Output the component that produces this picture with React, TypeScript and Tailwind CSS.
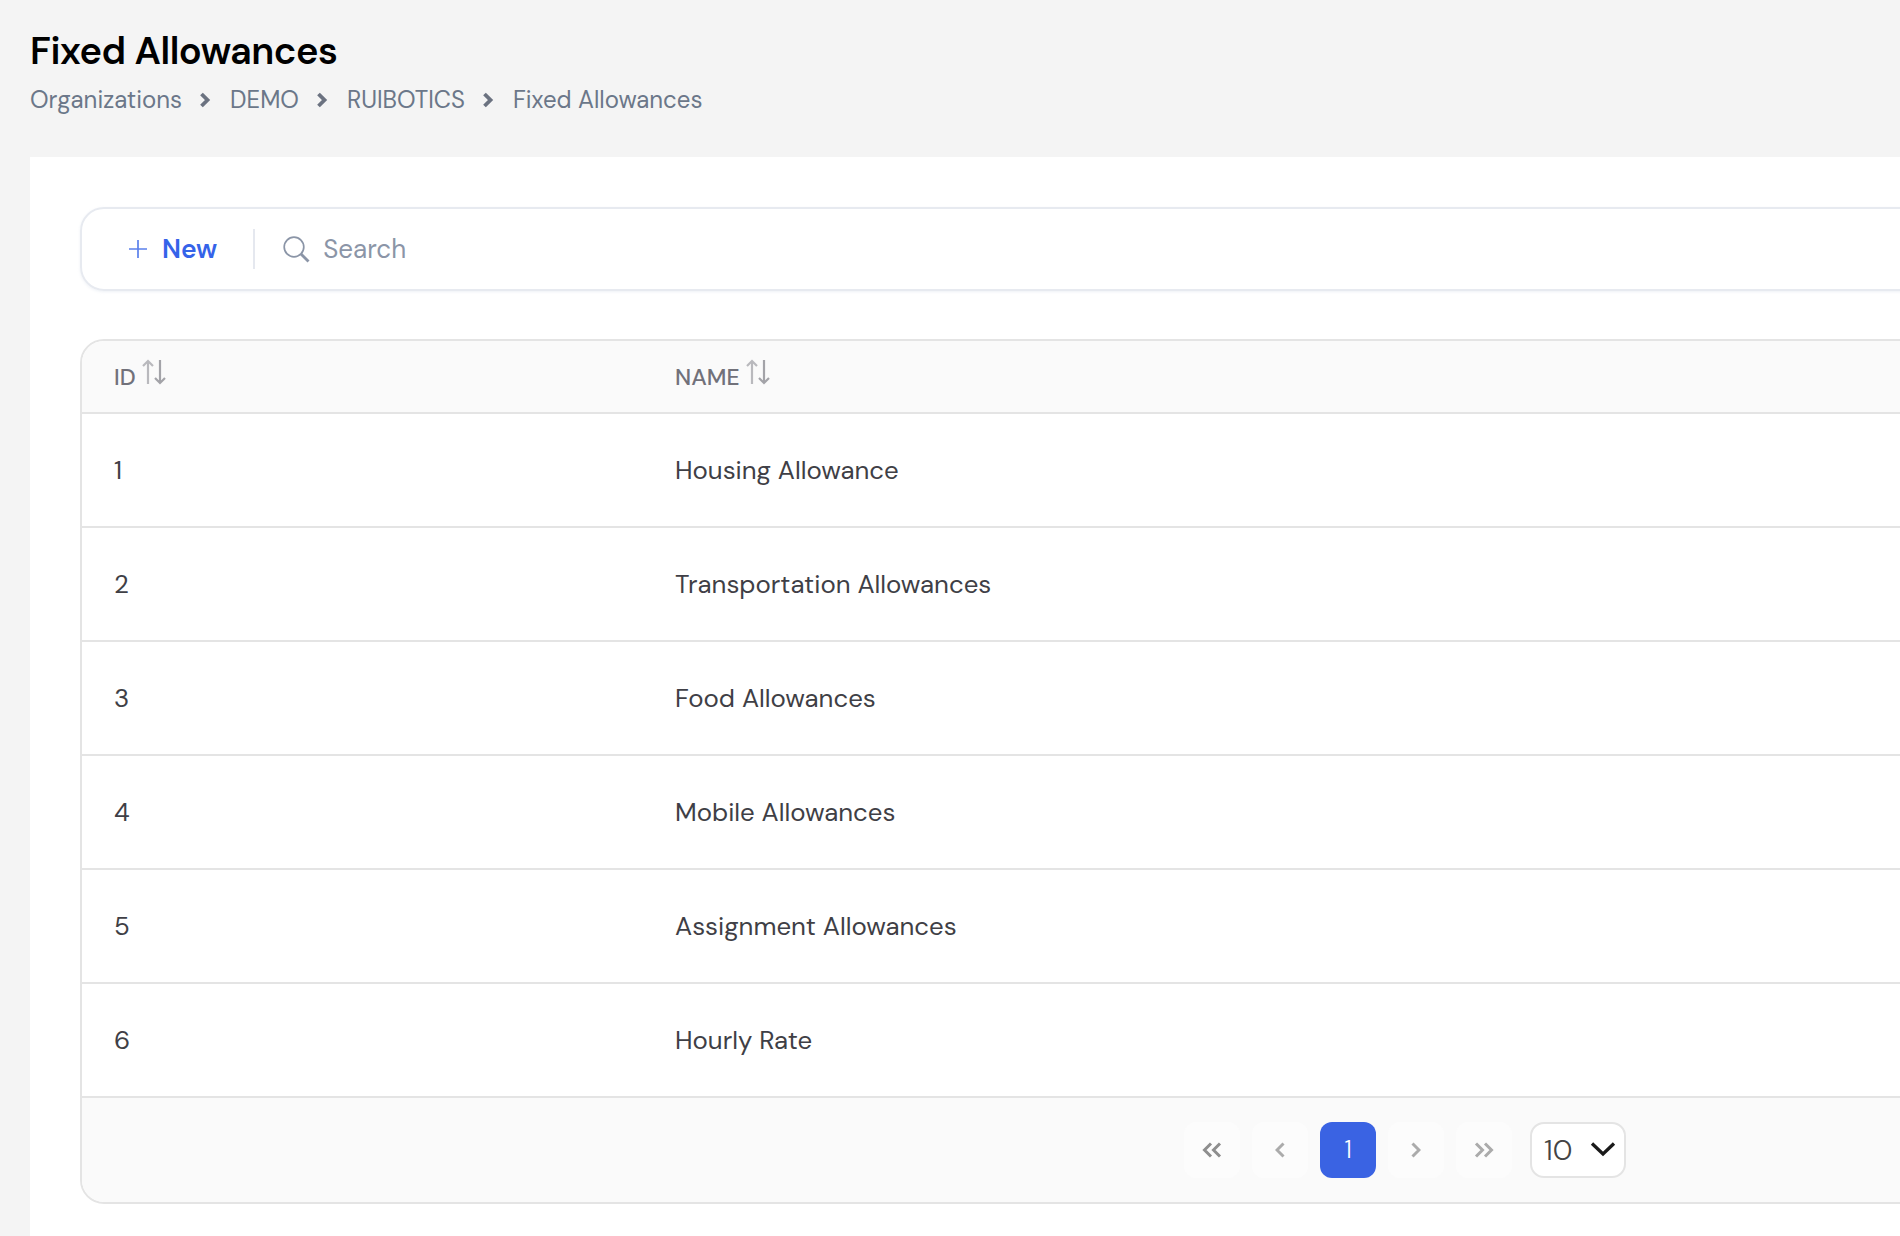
import type { ReactNode } from "react"

const rows = [
  { id: 1, name: "Housing Allowance" },
  { id: 2, name: "Transportation Allowances" },
  { id: 3, name: "Food Allowances" },
  { id: 4, name: "Mobile Allowances" },
  { id: 5, name: "Assignment Allowances" },
  { id: 6, name: "Hourly Rate" },
]

const crumbs = ["Organizations", "DEMO", "RUIBOTICS", "Fixed Allowances"]

function SortIcon() {
  return (
    <svg width="26" height="28" viewBox="0 0 26 28" fill="none" strokeWidth="2.2" className="mb-[8px] ml-[5px]">
      <path d="M7 26V3M2 8l5-5 5 5" stroke="#b9b9bd" />
      <path d="M19 2v23M14 20l5 5 5-5" stroke="#a3a3a8" />
    </svg>
  )
}

function Crumb() {
  return (
    <svg width="12" height="16" viewBox="0 0 12 16" fill="none" className="ml-[17px] mr-[19px]">
      <path d="M2.500 2 8.500 8l-6 6" stroke="#6b7280" strokeWidth="3.800" />
    </svg>
  )
}

function PageButton({ color, children }: { color: string; children: ReactNode }) {
  return (
    <button className={`flex h-[56px] w-[56px] items-center justify-center rounded-[12px] bg-[#fcfcfc] ${color}`}>
      {children}
    </button>
  )
}

function Chevrons({ d, w }: { d: string; w: number }) {
  return (
    <svg width={w} height="16" viewBox={`0 0 ${w} 16`} fill="none" stroke="currentColor" strokeWidth="3">
      <path d={d} />
    </svg>
  )
}

export default function App() {
  return (
    <div className="h-[1236px] w-[1900px] overflow-hidden bg-[#f4f4f4] font-['DM_Sans','Inter',sans-serif]">
      <div className="pl-[30px] pt-[26px]">
        <h1 className="text-[38px] font-semibold leading-[50px] tracking-[-0.45px] text-black">Fixed Allowances</h1>
        <div className="mt-[6px] flex h-[36px] items-center text-[24px] text-[#6b7789]">
          {crumbs.map((c, i) => (
            <div key={c} className="flex items-center">
              {i > 0 && <Crumb />}
              <span>{c}</span>
            </div>
          ))}
        </div>
      </div>

      <div className="ml-[30px] mt-[39px] h-[1079px] bg-white pl-[50px] pt-[50px]">
        <div className="flex h-[84px] w-[1900px] items-center rounded-[24px] border-2 border-[#e7eaf0] pl-[47px] shadow-[0_1px_3px_rgba(226,232,240,0.6)]">
          <div className="flex items-center text-[#3563e9]">
            <svg width="18" height="18" viewBox="0 0 18 18" fill="none" stroke="#5b80ec" strokeWidth="1.7">
              <path d="M9 0v18M0 9h18" />
            </svg>
            <span className="ml-[15px] pt-[2px] text-[26.400px] font-semibold">New</span>
          </div>
          <div className="ml-[36px] h-[40px] w-[2px] bg-[#e5e8ef]" />
          <svg width="27" height="27" viewBox="0 0 27 27" fill="none" stroke="#8b95a7" className="ml-[28px]">
            <circle cx="11" cy="11" r="9.800" strokeWidth="1.700" />
            <path d="m18 18 7.500 7.500" strokeWidth="2.800" />
          </svg>
          <span className="ml-[13px] text-[26px] text-[#8b95a7]">Search</span>
        </div>

        <div className="mt-[48px] w-[1900px] overflow-hidden rounded-[24px] border-2 border-[#e4e4e4]">
          <table className="w-full table-fixed border-collapse">
            <thead>
              <tr className="h-[72px] border-b-2 border-[#e4e4e4] bg-[#fafafa] text-left text-[23px] text-[#71717a]">
                <th className="w-[593px] pl-[32px] font-medium">
                  <div className="flex items-end pb-[1px]">
                    ID
                    <SortIcon />
                  </div>
                </th>
                <th className="font-medium">
                  <div className="flex items-end pb-[1px]">
                    NAME
                    <SortIcon />
                  </div>
                </th>
              </tr>
            </thead>
            <tbody className="text-[25.800px] text-[#3f3f46]">
              {rows.map((r) => (
                <tr key={r.id} className="h-[114px] border-b-2 border-[#e4e4e4]">
                  <td className="pl-[32px]">{r.id}</td>
                  <td>{r.name}</td>
                </tr>
              ))}
            </tbody>
          </table>
          <div className="flex h-[104px] items-center gap-[12px] bg-[#fafafa] pl-[1102px]">
            <PageButton color="text-[#8e8e8e]">
              <Chevrons w={20} d="M9 1.500 2.500 8 9 14.500M18 1.500 11.500 8 18 14.500" />
            </PageButton>
            <PageButton color="text-[#ababab]">
              <Chevrons w={10} d="M8.500 1.500 2 8l6.500 6.500" />
            </PageButton>
            <button className="flex h-[56px] w-[56px] items-center justify-center rounded-[12px] bg-[#3a63e3] text-[24px] font-light text-white">
              1
            </button>
            <PageButton color="text-[#ababab]">
              <Chevrons w={10} d="M1.500 1.500 8 8l-6.500 6.500" />
            </PageButton>
            <PageButton color="text-[#ababab]">
              <Chevrons w={20} d="M2 1.500 8.500 8 2 14.500M11 1.500 17.500 8 11 14.500" />
            </PageButton>
            <div className="ml-[6px] flex h-[56px] w-[96px] items-center justify-between rounded-[14px] border-2 border-[#e4e4e4] bg-white pl-[12px] pr-[8px] text-[29px] font-light text-[#444]">
              <span className="pt-[2px]">10</span>
              <svg width="26" height="16" viewBox="0 0 26 16" fill="none" stroke="#1a1a1a" strokeWidth="3.300" className="mb-[3px]">
                <path d="M2 2.500 13 13 24 2.500" />
              </svg>
            </div>
          </div>
        </div>
      </div>
    </div>
  )
}
